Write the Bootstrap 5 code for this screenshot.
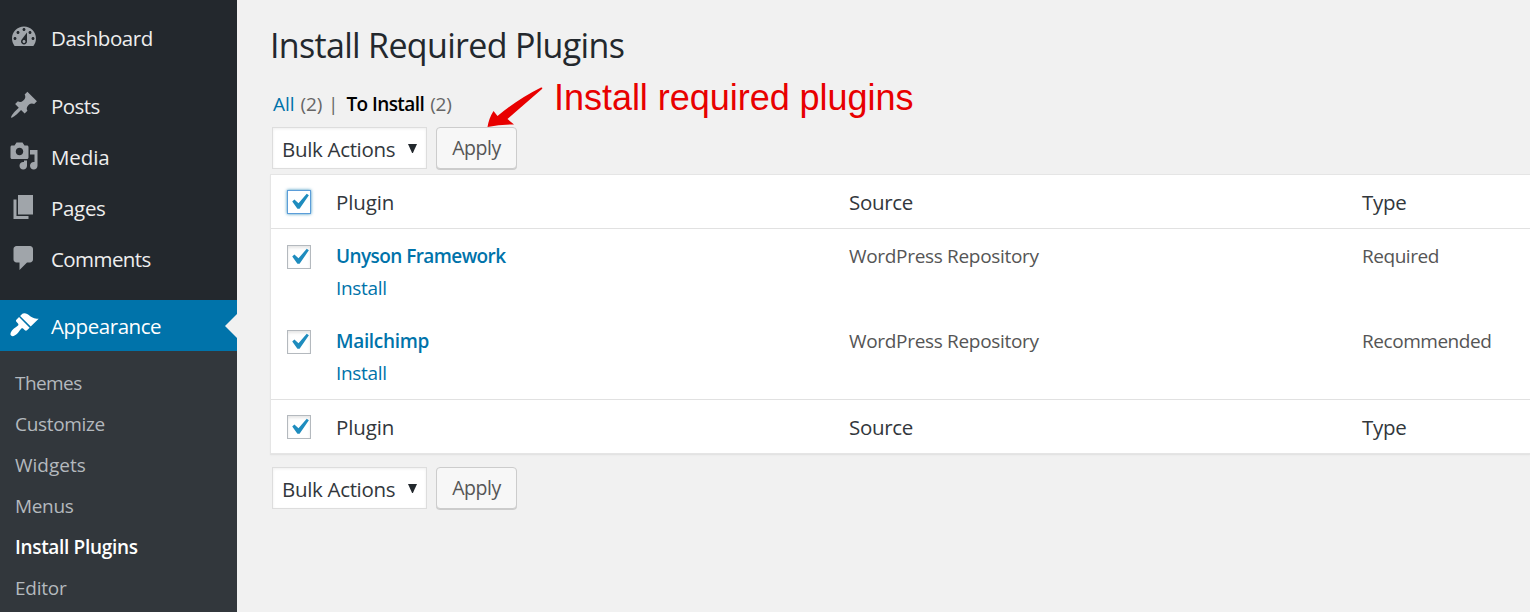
<!DOCTYPE html>
<html lang="en">
<head>
<meta charset="utf-8">
<meta name="viewport" content="width=device-width, initial-scale=1">
<title>Install Required Plugins</title>
<link href="https://cdn.jsdelivr.net/npm/bootstrap@5.3.0/dist/css/bootstrap.min.css" rel="stylesheet">
<style>
  body { background: #f1f1f1; font-family: "Open Sans", "Noto Sans", sans-serif; color: #444; height: 612px; overflow: hidden; }
  a { text-decoration: none; color: #0073aa; }
  /* tracking helpers */
  .tk-p1 { letter-spacing: .1px; }
  .tk-1 { letter-spacing: -.12px; } .tk-2 { letter-spacing: -.22px; } .tk-3 { letter-spacing: -.32px; }
  .tk-4 { letter-spacing: -.45px; } .tk-5 { letter-spacing: -.58px; }
  /* sidebar */
  .side { width: 237px; height: 612px; background: #23282d; padding-top: 13px; }
  .menu-row { height: 51px; font-size: 20.5px; line-height: 51px; color: #eee; padding-left: 9px; }
  .menu-row svg { width: 30px; height: 30px; fill: #a0a5aa; margin-top: 9px; }
  .menu-row span { margin-left: 12px; }
  .gap-row { height: 17px; } .gap-row-s { height: 15px; }
  .menu-row.current { background: #0073aa; color: #fff; line-height: 52px; }
  .menu-row.current svg { fill: #fff; margin-top: 10px; }
  .notch { right: 0; top: 14px; border: 12px solid transparent; border-right-color: #f1f1f1; border-left: 0; }
  .sub { background: #32373c; padding: 12px 0 0 15px; height: 261px; font-size: 19px; }
  .sub a { display: block; height: 41px; line-height: 41px; color: #b4b9be; }
  .sub a.here { color: #fff; font-weight: 600; }
  /* main */
  .main { padding-left: 33px; min-width: 0; }
  .page-title { font-size: 34px; line-height: 50px; font-weight: 400; color: #23282d; letter-spacing: -.68px; margin: 20px 0 0; }
  .filters { height: 30px; line-height: 30px; margin-top: 19px; font-size: 19px; color: #666; padding-left: 3px; }
  .filters .num { margin-left: 6px; }
  .filters .rule { margin-left: 6px; }
  .filters b { font-weight: 600; color: #000; margin-left: 8px; }
  .bar { margin: 8px 0 0 2px; }
  .bar.low { margin-top: 13px; }
  .picker { width: 155px; height: 42px; background: #fff; border: 1px solid #ddd; box-shadow: inset 0 1px 3px rgba(0,0,0,.07); padding-left: 9px; font-size: 20.5px; line-height: 42px; color: #32373c; }
  .picker svg { width: 9px; height: 10px; fill: #23282d; margin: 16px 9px 0 auto; }
  .apply { width: 81px; height: 42px; margin-left: 9px; padding: 0; background: #f7f7f7; border: 1px solid #ccc; border-radius: 4px; box-shadow: 0 1px 0 #ccc; font-size: 19.5px; line-height: 40px; color: #555; }
  .plugins { margin-top: 5px; background: #fff; border: 1px solid #e5e5e5; border-right: 0; box-shadow: 0 1px 1px rgba(0,0,0,.04), 0 2px 2px rgba(0,0,0,.02); }
  .edge { line-height: 55px; font-size: 20.5px; color: #32373c; height: 54px; }
  .edge.top { border-bottom: 1px solid #e1e1e1; }
  .edge.bottom { border-top: 1px solid #e1e1e1; }
  .item { height: 85px; font-size: 19px; line-height: 32px; color: #555; padding-top: 11px; }
  .item b { font-weight: 600; color: #0073aa; }
  .cell { width: 513px; flex: none; }
  .cell-end { flex: 1 1 0; min-width: 0; white-space: nowrap; }
  .tickwrap { width: 65px; flex: none; padding-left: 16px; }
  .tick { display: block; width: 24px; height: 24px; background: #fff; border: 1px solid #b4b9be; box-shadow: inset 0 2px 3px rgba(0,0,0,.1); }
  .tick svg { display: block; width: 32px; height: 32px; margin: -5px 0 0 -5px; fill: #1e8cbe; }
  .edge .tick { margin-top: 15px; }
  .item .tick { margin-top: 5px; }
  .tick.focus { border-color: #5b9dd9; box-shadow: 0 0 3px rgba(0,115,170,.8); }
  .callout { left: 554px; top: 76px; font: 36px/44px "Liberation Sans", sans-serif; color: #e80000; white-space: nowrap; letter-spacing: -.03px; }
  .arrow { left: 480px; top: 80px; }
</style>
</head>
<body>
<svg width="0" height="0" class="position-absolute">
  <symbol id="yes" viewBox="0 0 20 20"><path d="M14.83 4.89l1.34.94-5.81 8.38H9.02L5.78 9.67l1.34-1.25 2.57 2.4z"/></symbol>
  <symbol id="down" viewBox="0 0 9 10"><path d="M0 0h9L4.900 9h-.8z"/></symbol>
</svg>
<div class="d-flex">
  <nav class="side flex-shrink-0">
    <div class="menu-row d-flex"><svg viewBox="0 0 20 20"><path d="M3.76 16h12.48c1.11-1.38 1.76-3.13 1.76-5 0-4.41-3.58-8-8-8s-8 3.59-8 8c0 1.87.66 3.62 1.76 5zM10 4c.55 0 1 .45 1 1s-.45 1-1 1-1-.45-1-1 .45-1 1-1zM6 6c.55 0 1 .45 1 1s-.45 1-1 1-1-.45-1-1 .45-1 1-1zm8 0c.55 0 1 .45 1 1s-.45 1-1 1-1-.45-1-1 .45-1 1-1zm-5.37 5.55L12 7v6c0 1.1-.9 2-2 2s-2-.9-2-2c0-.57.24-1.08.63-1.45zM4 10c.55 0 1 .45 1 1s-.45 1-1 1-1-.45-1-1 .45-1 1-1zm12 0c.55 0 1 .45 1 1s-.45 1-1 1-1-.45-1-1 .45-1 1-1zm-5 3c0-.55-.45-1-1-1s-1 .45-1 1 .45 1 1 1 1-.45 1-1z" fill-rule="evenodd"/></svg><span class="tk-4">Dashboard</span></div>
    <div class="gap-row"></div>
    <div class="menu-row d-flex"><svg viewBox="0 0 20 20"><path d="M10.44 3.02l1.82-1.82 6.36 6.35-1.83 1.82c-1.05-.68-2.48-.57-3.41.36l-.75.75c-.92.93-1.04 2.35-.35 3.41l-1.83 1.82-2.41-2.41-2.8 2.79c-.42.42-3.38 2.71-3.8 2.29s1.86-3.39 2.28-3.81l2.79-2.79L4.1 9.36l1.83-1.82c1.05.69 2.48.57 3.4-.36l.75-.75c.93-.92 1.05-2.35.36-3.41z"/></svg><span class="tk-5">Posts</span></div>
    <div class="menu-row d-flex"><svg viewBox="0 0 20 20"><path d="M13 11V4c0-.55-.45-1-1-1h-1.67L9 1H5L3.67 3H2c-.55 0-1 .45-1 1v7c0 .55.45 1 1 1h10c.55 0 1-.45 1-1zM7 4.5c1.38 0 2.5 1.12 2.5 2.5S8.38 9.5 7 9.5 4.5 8.38 4.5 7 5.62 4.5 7 4.5zM14 6h5v10.5c0 1.38-1.12 2.5-2.5 2.5S14 17.88 14 16.5s1.12-2.5 2.5-2.5c.17 0 .34.02.5.05V9h-3V6zm-4 8.05V13h2v3.5c0 1.38-1.12 2.5-2.5 2.5S7 17.88 7 16.5 8.12 14 9.5 14c.17 0 .34.02.5.05z" fill-rule="evenodd"/></svg><span class="tk-1">Media</span></div>
    <div class="menu-row d-flex"><svg viewBox="0 0 20 20"><path d="M6 15V2h10v13H6zm-1 1h8v2H3V5h2v11z"/></svg><span class="tk-3">Pages</span></div>
    <div class="menu-row d-flex"><svg viewBox="0 0 20 20"><path d="M5 2h9c1.1 0 2 .9 2 2v7c0 1.1-.9 2-2 2h-2l-5 5v-5H5c-1.1 0-2-.9-2-2V4c0-1.1.9-2 2-2z"/></svg><span class="tk-5">Comments</span></div>
    <div class="gap-row-s"></div>
    <div class="menu-row current d-flex position-relative"><svg viewBox="0 0 20 20"><path d="M14.48 11.06L7.41 3.99l1.5-1.5c.5-.56 2.3-.47 3.51.32 1.21.8 1.43 1.28 2.91 2.1 1.18.64 2.45 1.26 4.45.85zm-.71.71L6.7 4.7 4.93 6.47c-.39.39-.39 1.02 0 1.41l1.06 1.06c.39.39.39 1.03 0 1.42-.6.6-1.43 1.11-2.21 1.69-.35.26-.7.53-1.01.84C1.43 14.23.4 16.08 1.4 17.07c.99 1 2.84-.03 4.18-1.36.31-.31.58-.66.85-1.02.57-.78 1.08-1.61 1.69-2.21.39-.39 1.02-.39 1.41 0l1.06 1.06c.39.39 1.02.39 1.41 0z"/></svg><span class="tk-4">Appearance</span><i class="notch position-absolute"></i></div>
    <div class="sub">
      <a href="#" class="tk-5">Themes</a>
      <a href="#" class="tk-3">Customize</a>
      <a href="#">Widgets</a>
      <a href="#" class="tk-3">Menus</a>
      <a href="#" class="here tk-3">Install Plugins</a>
      <a href="#" class="tk-2">Editor</a>
    </div>
  </nav>
  <main class="main flex-grow-1">
    <h1 class="page-title">Install Required Plugins</h1>
    <div class="filters d-flex"><a href="#">All</a><span class="num tk-2">(2)</span><span class="rule">|</span><b class="tk-5">To Install</b><span class="num tk-2">(2)</span></div>
    <div class="bar d-flex">
      <div class="picker d-flex"><span class="tk-3">Bulk Actions</span><svg><use href="#down"/></svg></div>
      <button class="apply btn tk-4">Apply</button>
    </div>
    <div class="plugins">
      <div class="edge top d-flex"><div class="tickwrap"><span class="tick focus"><svg><use href="#yes"/></svg></span></div><div class="cell tk-1">Plugin</div><div class="cell tk-3">Source</div><div class="cell-end tk-3">Type</div></div>
      <div class="item d-flex"><div class="tickwrap"><span class="tick"><svg><use href="#yes"/></svg></span></div><div class="cell"><b class="tk-5">Unyson Framework</b><br><a href="#" class="tk-3">Install</a></div><div class="cell tk-3">WordPress Repository</div><div class="cell-end tk-4">Required</div></div>
      <div class="item d-flex"><div class="tickwrap"><span class="tick"><svg><use href="#yes"/></svg></span></div><div class="cell"><b class="tk-3">Mailchimp</b><br><a href="#" class="tk-3">Install</a></div><div class="cell tk-3">WordPress Repository</div><div class="cell-end tk-4">Recommended</div></div>
      <div class="edge bottom d-flex"><div class="tickwrap"><span class="tick"><svg><use href="#yes"/></svg></span></div><div class="cell tk-1">Plugin</div><div class="cell tk-3">Source</div><div class="cell-end tk-3">Type</div></div>
    </div>
    <div class="bar low d-flex">
      <div class="picker d-flex"><span class="tk-3">Bulk Actions</span><svg><use href="#down"/></svg></div>
      <button class="apply btn tk-4">Apply</button>
    </div>
  </main>
</div>
<svg class="arrow position-absolute" width="66" height="50" fill="#e80000"><path d="M61 7.500Q63 7.200 62 9L27.500 39l6.500 5.500Q20 44.500 7.500 47Q9 38 13.500 31l4 5Q38 19 61 7.500z"/></svg>
<div class="callout position-absolute">Install required plugins</div>
<script src="https://cdn.jsdelivr.net/npm/bootstrap@5.3.0/dist/js/bootstrap.bundle.min.js"></script>
</body>
</html>
